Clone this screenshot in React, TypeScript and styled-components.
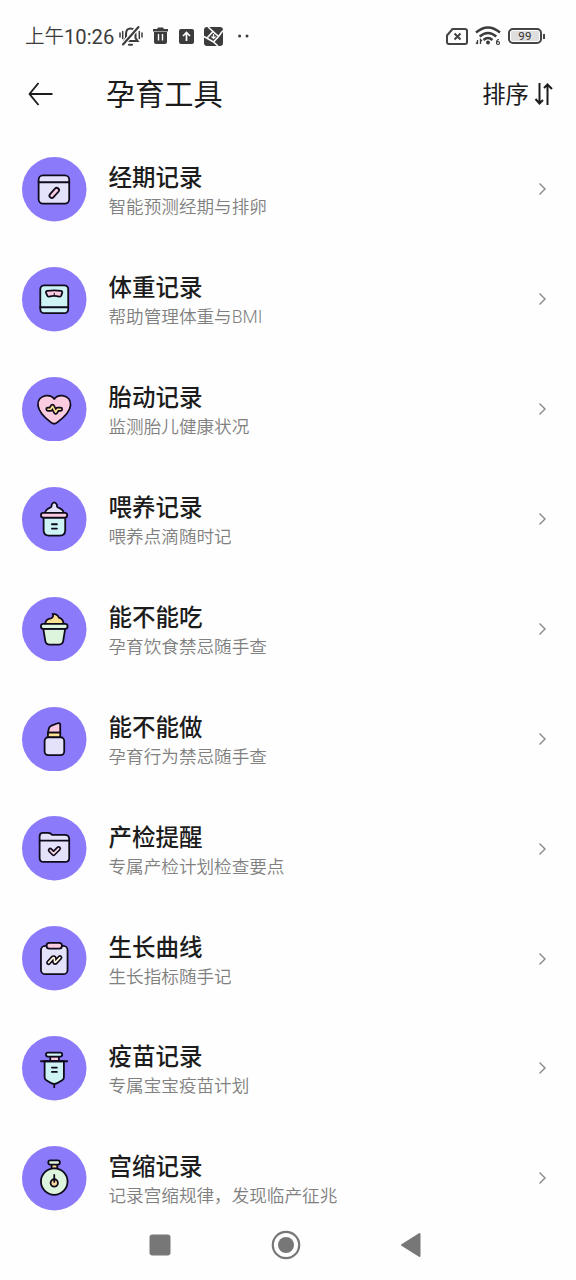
import React from "react";
import styled, { createGlobalStyle } from "styled-components";

const GlobalStyle = createGlobalStyle`
  * { box-sizing: border-box; }
  body { margin: 0; background: #fefefe; }
`;

const Screen = styled.main`
  width: 576px;
  height: 1280px;
  display: flex;
  flex-direction: column;
  overflow: hidden;
  background: #fefefe;
  color: #1c1c1c;
  font-family: Roboto, "Noto Sans CJK SC", sans-serif;
`;

const StatusBar = styled.div`
  height: 56px;
  padding: 16px 34px 0 25px;
  display: flex;
  align-items: center;
  color: #3c3c3c;
  flex: none;
`;

const Clock = styled.span`
  display: flex;
  align-items: center;
  width: 94px;
  padding-top: 1px;
  font-size: 20.2px;
  line-height: 24px;
  white-space: nowrap;
`;

const Meridiem = styled.span`
  font-size: 19.5px;
  font-weight: 350;
`;

const StatusIcon = styled.svg<{ $gap?: number }>`
  display: block;
  flex: none;
  margin-left: ${(p) => p.$gap ?? 0}px;
`;

const Spacer = styled.div`
  flex: 1;
`;

const Battery = styled.div`
  position: relative;
  top: -0.5px;
  margin-left: 7px;
  width: 34px;
  height: 16px;
  border: 2px solid #444;
  border-radius: 5px;
  padding: 1px;
  display: flex;

  &::after {
    content: "";
    position: absolute;
    right: -5px;
    top: 4px;
    width: 2px;
    height: 5px;
    background: #444;
  }
`;

const Charge = styled.span`
  flex: 1;
  border-radius: 2px;
  background: #dedede;
  color: #333;
  font-size: 11.5px;
  line-height: 11px;
  letter-spacing: 0.3px;
  text-align: center;
`;

const Header = styled.header`
  height: 78.5px;
  padding: 0 23px 2.5px 27px;
  display: flex;
  align-items: center;
  flex: none;
`;

const PageTitle = styled.h1`
  margin: 2px 0 0 53px;
  flex: 1;
  font-size: 29.2px;
  line-height: 40px;
  font-weight: 400;
`;

const SortButton = styled.div`
  display: flex;
  align-items: center;
  gap: 5px;
  font-size: 23.4px;
  line-height: 32px;
`;

const SortLabel = styled.span`
  padding-top: 1px;
`;

const List = styled.ul`
  list-style: none;
  margin: 0;
  padding: 0;
  flex: 1;
  min-height: 0;
  overflow: hidden;
`;

const Row = styled.li`
  height: 109.88px;
  padding: 0 29px 0 22px;
  display: flex;
  align-items: center;
`;

const Badge = styled.svg`
  width: 64.5px;
  height: 64.5px;
  flex: none;
`;

const Copy = styled.div`
  flex: 1;
  margin-left: 22px;
  padding-top: 4px;
`;

const Name = styled.div`
  font-size: 23.5px;
  line-height: 32px;
  font-weight: 500;
`;

const Hint = styled.div`
  font-size: 17.6px;
  line-height: 26px;
  font-weight: 350;
  color: #808080;
`;

const NavBar = styled.nav`
  height: 67px;
  padding: 0 155px 3px 149px;
  display: flex;
  align-items: center;
  justify-content: space-between;
  flex: none;
`;

const lilac = "#e4e2fb";
const mint = "#cdf3f5";
const pink = "#fbcbe0";
const green = "#dcf5dc";
const yellow = "#fbe08f";

const glyphs: Record<string, React.ReactNode> = {
  calendar: (
    <>
      <rect x="50" y="55" width="92" height="85" rx="13" fill={lilac} />
      <path d="M50 76H142" />
      <rect x="79" y="101" width="36" height="14" rx="7" transform="rotate(-48 97 108)" fill={pink} />
    </>
  ),
  scale: (
    <>
      <rect x="55" y="55" width="84" height="84" rx="12" fill={mint} />
      <path d="M55 121H139" />
      <path d="M72 77Q71 73 76 72Q97 69 117 72Q122 73 121 77L118 86Q117 90 112 89Q97 85 81 89Q77 90 76 86Z" fill={pink} />
      <path d="M97 79V86" strokeWidth="3" />
    </>
  ),
  heart: (
    <>
      <path d="M97 66C91 57 82 55 72 56C56 58 47 70 48 85C50 105 67 121 85 135Q97 146 108 135C127 121 144 105 146 85C147 70 138 58 122 56C112 55 103 57 97 66Z" fill={pink} />
      <path d="M78 97H86L92 88L101 106L107 97H116" strokeWidth="15" />
      <path d="M78 97H86L92 88L101 106L107 97H116" stroke={yellow} strokeWidth="5" />
    </>
  ),
  bottle: (
    <>
      <path d="M69 78C71 66 80 64 87 61C90 59 89 56 89 53Q97 40 105 53C105 56 104 59 107 61C115 64 124 66 126 78Z" fill={lilac} />
      <path d="M65 92H130V130Q130 146 114 146H81Q65 146 65 130Z" fill={mint} />
      <rect x="57" y="78" width="79" height="14" rx="7" fill={pink} />
      <path d="M90 112H105M90 125H105" />
    </>
  ),
  cup: (
    <>
      <path d="M70 82C70 70 78 65 87 64C94 63 95 56 92 51C104 51 109 57 111 62C121 65 125 72 125 82Z" fill={yellow} />
      <path d="M64 95L70 132Q72 143 83 143H111Q122 143 124 132L130 95Z" fill={green} />
      <rect x="57" y="81" width="80" height="15" rx="7" fill={green} />
    </>
  ),
  lipstick: (
    <>
      <path d="M78 77L81 64Q82 60 87 57L107 49Q115 47 115 54V77Z" fill={pink} />
      <path d="M78 77H115V92H78Z" fill={yellow} />
      <rect x="68" y="91" width="59" height="54" rx="11" fill={lilac} />
    </>
  ),
  folder: (
    <>
      <path d="M53 74V61Q53 51 63 51H78Q87 51 90 57H128Q142 57 142 70V126Q142 138 130 138H65Q53 138 53 126Z" fill={lilac} />
      <path d="M53 74H142" />
      <path d="M85 103L95 113L110 98" strokeWidth="15" />
      <path d="M85 103L95 113L110 98" stroke="#fbd9e4" strokeWidth="5" />
    </>
  ),
  clipboard: (
    <>
      <rect x="57" y="60" width="80" height="85" rx="13" fill={lilac} />
      <rect x="74" y="51" width="46" height="17" rx="8" fill={pink} />
      <path d="M80 110L93 96Q96 94 97 97L98 108Q99 111 102 108L114 95" strokeWidth="15" />
      <path d="M80 110L93 96Q96 94 97 97L98 108Q99 111 102 108L114 95" stroke="#fff7d9" strokeWidth="5" />
    </>
  ),
  syringe: (
    <>
      <path d="M85 61H111V76H85Z" fill={pink} />
      <rect x="72" y="50" width="49" height="12" rx="6" fill={mint} />
      <path d="M68 76H126V124Q126 129 122 132Q107 142 97 145Q87 142 72 132Q68 129 68 124Z" fill={mint} />
      <path d="M57 76H136M97 145V154M90 95H105M90 108H105" />
    </>
  ),
  timer: (
    <>
      <path d="M89 54H106V68H89Z" fill={yellow} />
      <rect x="79" y="43" width="35" height="13" rx="6" fill={green} />
      <circle cx="97" cy="107" r="40" fill={green} />
      <circle cx="97" cy="111" r="11" fill="#fbd99b" />
      <path d="M97 87V108" />
    </>
  ),
};

const tools = [
  { icon: "calendar", name: "经期记录", hint: "智能预测经期与排卵" },
  { icon: "scale", name: "体重记录", hint: "帮助管理体重与BMI" },
  { icon: "heart", name: "胎动记录", hint: "监测胎儿健康状况" },
  { icon: "bottle", name: "喂养记录", hint: "喂养点滴随时记" },
  { icon: "cup", name: "能不能吃", hint: "孕育饮食禁忌随手查" },
  { icon: "lipstick", name: "能不能做", hint: "孕育行为禁忌随手查" },
  { icon: "folder", name: "产检提醒", hint: "专属产检计划检查要点" },
  { icon: "clipboard", name: "生长曲线", hint: "生长指标随手记" },
  { icon: "syringe", name: "疫苗记录", hint: "专属宝宝疫苗计划" },
  { icon: "timer", name: "宫缩记录", hint: "记录宫缩规律，发现临产征兆" },
];

export default function App() {
  return (
    <Screen>
      <GlobalStyle />
      <StatusBar>
        <Clock>
          <Meridiem>上午</Meridiem>10:26
        </Clock>
        <StatusIcon width="24" height="22" viewBox="0 0 24 22" fill="none" stroke="#3c3c3c" strokeWidth="2.1" strokeLinecap="round">
          <path d="M5 16H18.500L16.500 13V9C16.500 5.500 14.500 3.500 11.500 3.500S7 5.500 7 9V13L5 16M10 19.800H13" />
          <path d="M20 1L3.500 20" stroke="#fefefe" strokeWidth="4.500" />
          <path d="M19.500 2L4 19.500" />
          <path d="M1 8V12M3.700 6.500V13.500M20.300 6.500V13.500M23 8V12" strokeWidth="1.500" />
        </StatusIcon>
        <StatusIcon $gap={10} width="15" height="18" viewBox="0 0 15 18">
          <path d="M0 2H4L5 .5H10L11 2H15V4.500H0ZM1 5H14V15Q14 17 12 17H3Q1 17 1 15Z" fill="#3c3c3c" />
          <path d="M5.500 7V13.500M9.500 7V13.500" stroke="#fefefe" strokeWidth="1.400" />
        </StatusIcon>
        <StatusIcon $gap={11} width="15" height="15" viewBox="0 0 15 15" fill="none" stroke="#fefefe" strokeWidth="1.700">
          <rect width="15" height="15" rx="2" fill="#3c3c3c" stroke="none" />
          <path d="M7.500 12V4M4 7L7.500 3.500L11 7" />
        </StatusIcon>
        <StatusIcon $gap={10} width="19" height="19" viewBox="0 0 19 19" fill="none" stroke="#fefefe" strokeWidth="1.600">
          <rect width="19" height="19" rx="3" fill="#3c3c3c" stroke="none" />
          <path d="M4 0L14.500 9.500L9.500 15L0 9.500M19 3.500L14.500 9.500M9.500 4L3.500 10.500M9.500 15L14 19" />
          <path d="M9.500 7V11M7.500 9.500L9.500 11.500L11.500 9.500" strokeWidth="1.200" />
        </StatusIcon>
        <StatusIcon $gap={15} width="11" height="4" viewBox="0 0 11 4" fill="#3c3c3c">
          <circle cx="1.600" cy="2" r="1.500" />
          <circle cx="9" cy="2" r="1.500" />
        </StatusIcon>
        <Spacer />
        <StatusIcon width="22" height="17" viewBox="0 0 22 17" fill="none" stroke="#444" strokeWidth="2">
          <path d="M6.500 1H19Q21 1 21 3V14Q21 16 19 16H3Q1 16 1 14V7.500Z" strokeLinejoin="round" />
          <path d="M8.500 5.500L14.500 11.500M14.500 5.500L8.500 11.500" />
        </StatusIcon>
        <StatusIcon $gap={7} width="26" height="20" viewBox="0 0 26 20" fill="none" stroke="#3c3c3c" strokeWidth="2.400">
          <path d="M1 6.500Q13 -3.500 25 6.500M4.700 10.500Q13 3.500 21.300 10.500M8.500 14Q13 10 17.500 14" />
          <circle cx="13" cy="16.500" r="2" fill="#3c3c3c" stroke="none" />
          <path d="M2.500 14V18M1 16.500L2.500 18M5.500 18V13.500L7 15" strokeWidth="1.300" />
          <path d="M24 13.500Q21.500 13.500 21.500 17" strokeWidth="1.200" />
          <circle cx="23" cy="17" r="1.500" strokeWidth="1.200" />
        </StatusIcon>
        <Battery>
          <Charge>99</Charge>
        </Battery>
      </StatusBar>
      <Header>
        <StatusIcon width="26" height="26" viewBox="0 0 26 26" fill="none" stroke="#1c1c1c" strokeWidth="1.900">
          <path d="M25.500 13H2.500M11.500 2L2.500 13L11.500 24" strokeLinejoin="round" />
        </StatusIcon>
        <PageTitle>孕育工具</PageTitle>
        <SortButton>
          <SortLabel>排序</SortLabel>
          <StatusIcon width="19" height="22" viewBox="0 0 19 22" fill="none" stroke="#1c1c1c" strokeWidth="2">
            <path d="M5.500 0V20M1.500 16L5.500 20.500L9 17M13.500 22V2M10 5L13.500 1.500L18 6" />
          </StatusIcon>
        </SortButton>
      </Header>
      <List>
        {tools.map((tool) => (
          <Row key={tool.icon}>
            <Badge viewBox="0 0 194 194" fill="none" stroke="#100b1c" strokeWidth="5.400" strokeLinecap="round" strokeLinejoin="round">
              <circle cx="97" cy="97" r="97" fill="#8b7bfb" stroke="none" />
              {glyphs[tool.icon]}
            </Badge>
            <Copy>
              <Name>{tool.name}</Name>
              <Hint>{tool.hint}</Hint>
            </Copy>
            <StatusIcon width="9" height="14" viewBox="0 0 9 14" fill="none" stroke="#888" strokeWidth="1.400">
              <path d="M1.500 1.500L7 7L1.500 12.500" />
            </StatusIcon>
          </Row>
        ))}
      </List>
      <NavBar>
        <StatusIcon width="22" height="22" viewBox="0 0 22 22" fill="#777">
          <rect x=".5" y=".5" width="21" height="21" rx="3" />
        </StatusIcon>
        <StatusIcon width="30" height="30" viewBox="0 0 30 30" fill="none" stroke="#777" strokeWidth="2.200">
          <circle cx="15" cy="15" r="13.200" />
          <circle cx="15" cy="15" r="8" fill="#777" stroke="none" />
        </StatusIcon>
        <StatusIcon width="21" height="26" viewBox="0 0 21 26" fill="#777" stroke="#777" strokeWidth="2" strokeLinejoin="round">
          <path d="M2 13L19.500 2V24Z" />
        </StatusIcon>
      </NavBar>
    </Screen>
  );
}
